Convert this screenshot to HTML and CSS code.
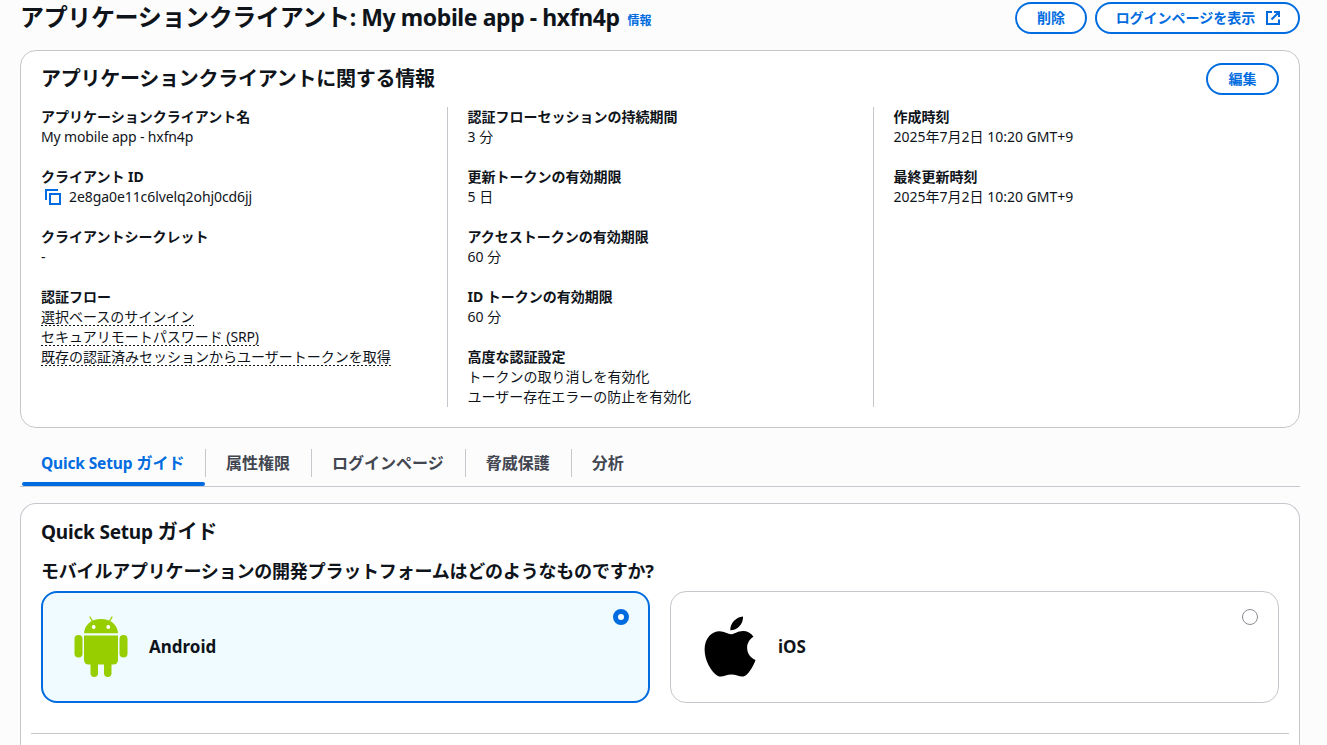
FILE: index.html
```html
<!DOCTYPE html>
<html lang="ja">
<head>
<meta charset="utf-8">
<title>アプリケーションクライアント</title>
<link rel="stylesheet" href="styles.css">
</head>
<body>
<main class="page">
  <header class="page-header">
    <h1 class="page-title">アプリケーションクライアント<span class="en">: My mobile app - hxfn4p</span></h1>
    <a class="info">情報</a>
    <div class="actions">
      <button class="btn">削除</button>
      <button class="btn btn-wide">ログインページを表示
        <svg class="icon" viewBox="0 0 16 16"><path d="M7 2H2v12h12V9.500M9 2h5v5M6.500 9.500 14 2"/></svg>
      </button>
    </div>
  </header>

  <section class="card details">
    <div class="card-header">
      <h2 class="card-title">アプリケーションクライアントに関する情報</h2>
      <button class="btn btn-edit">編集</button>
    </div>
    <div class="columns">
      <dl class="column">
        <div><dt>アプリケーションクライアント名</dt><dd><span class="en">My mobile app - hxfn4p</span></dd></div>
        <div><dt>クライアント <span class="en">ID</span></dt><dd class="copy"><svg class="icon" viewBox="0 0 16 16"><path d="M1 11V1h12M5 5h10v10H5z"/></svg><span class="en id">2e8ga0e11c6lvelq2ohj0cd6jj</span></dd></div>
        <div><dt>クライアントシークレット</dt><dd>-</dd></div>
        <div><dt>認証フロー</dt>
          <dd><span class="dotted">選択ベースのサインイン</span></dd>
          <dd><span class="dotted">セキュアリモートパスワード <span class="en">(SRP)</span></span></dd>
          <dd><span class="dotted">既存の認証済みセッションからユーザートークンを取得</span></dd></div>
      </dl>
      <dl class="column">
        <div><dt>認証フローセッションの持続期間</dt><dd>3 分</dd></div>
        <div><dt>更新トークンの有効期限</dt><dd>5 日</dd></div>
        <div><dt>アクセストークンの有効期限</dt><dd>60 分</dd></div>
        <div><dt><span class="en">ID</span> トークンの有効期限</dt><dd>60 分</dd></div>
        <div><dt>高度な認証設定</dt><dd>トークンの取り消しを有効化</dd><dd>ユーザー存在エラーの防止を有効化</dd></div>
      </dl>
      <dl class="column">
        <div><dt>作成時刻</dt><dd>2025年7月2日 10:20 GMT+9</dd></div>
        <div><dt>最終更新時刻</dt><dd>2025年7月2日 10:20 GMT+9</dd></div>
      </dl>
    </div>
  </section>

  <nav class="tabs">
    <a class="tab active"><span><span class="en">Quick Setup</span> ガイド</span></a>
    <a class="tab"><span>属性権限</span></a>
    <a class="tab"><span>ログインページ</span></a>
    <a class="tab"><span>脅威保護</span></a>
    <a class="tab"><span>分析</span></a>
  </nav>

  <section class="card guide">
    <h2 class="card-title"><span class="en">Quick Setup</span> ガイド</h2>
    <h3 class="question">モバイルアプリケーションの開発プラットフォームはどのようなものですか?</h3>
    <div class="tiles">
      <label class="tile selected">
        <svg class="logo" viewBox="0 0 54 62">
          <g fill="#97ce00">
            <path d="M10 17.300C10.500 9 17 3 27 3s16.500 6 17 14.300z"/>
            <path d="M10 19.500h34v24.500a4.500 4.500 0 0 1-4.500 4.500h-25A4.500 4.500 0 0 1 10 44z"/>
            <rect x="0.500" y="19" width="8" height="22.500" rx="4"/>
            <rect x="45.500" y="19" width="8" height="22.500" rx="4"/>
            <rect x="16.500" y="40" width="7.500" height="21" rx="3.700"/>
            <rect x="30" y="40" width="7.500" height="21" rx="3.700"/>
          </g>
          <path d="m19 6-3-5M35 6l3-5" stroke="#97ce00" stroke-width="1.300" stroke-linecap="round"/>
          <circle cx="19.700" cy="11" r="1.900" fill="#fff"/><circle cx="34.300" cy="11" r="1.900" fill="#fff"/>
        </svg>
        <span class="tile-name">Android</span>
        <span class="radio"></span>
      </label>
      <label class="tile">
        <svg class="logo" viewBox="0 0 54 62">
          <path d="M39 .500C39.500 8 33.500 14.500 26.300 14.300 26 7.500 32 1 39 .500zM27 18.300c3 0 6.500-3.300 12-3.300 4.300 0 8 2 10.500 5.700-9.500 5.800-8 19.300 2 23.300C50 49 45.500 56.500 42 59.200c-4.500 3.200-8.500-.800-14.500-.800s-9.500 3.900-14 1.300C7 55.700.600 44.500.600 33.500.600 22 8 15.500 15.500 15.300c5 0 8.500 3 11.500 3z"/>
        </svg>
        <span class="tile-name">iOS</span>
        <span class="radio"></span>
      </label>
    </div>
    <hr class="rule">
  </section>
</main>
</body>
</html>
```
FILE: styles.css
```css
* { box-sizing: border-box; }
html, body { height: 100%; overflow: hidden; }
body {
  margin: 0;
  background: #fcfcfd;
  color: #0f141a;
  font: 14px/20px "Noto Sans", "Noto Sans CJK JP", sans-serif;
}
h1, h2, h3, dl, dd { margin: 0; }
.page { height: 100%; overflow: hidden; padding: 0 27px 0 20px; }
.page-header { display: flex; height: 50px; align-items: flex-start; white-space: nowrap; }
.page-title { font-size: 24px; line-height: 30px; padding-top: 2px; letter-spacing: -0.35px; }
.page-title .en { font-size: 23px; letter-spacing: -0.42px; }
.info { font-size: 12px; font-weight: 700; color: #006ce0; margin: 11px 0 0 8px; }
.actions { display: flex; gap: 8px; margin: 2px 0 0 auto; }
.btn {
  display: flex;
  align-items: center;
  justify-content: center;
  gap: 8px;
  width: 72px;
  height: 32px;
  padding: 0;
  border: 2px solid #006ce0;
  border-radius: 20px;
  background: #fff;
  color: #006ce0;
  font: inherit;
  font-weight: 700;
}
.btn-wide { width: 205px; gap: 10px; padding-left: 2px; }
.btn-edit { width: 73px; }
.icon { width: 16px; height: 16px; fill: none; stroke: #006ce0; stroke-width: 2; flex: none; }
.card { border: 1px solid #c6c6cd; border-radius: 16px; background: #fff; padding: 12px 20px 0; }
.details { height: 378px; }
.card-header { display: flex; justify-content: space-between; height: 44px; }
.card-title { font-size: 20px; line-height: 32px; letter-spacing: -0.25px; }
.card-title .en { font-size: 19px; letter-spacing: -0.2px; }
.columns { display: grid; grid-template-columns: 406px 426px 406px; height: 300px; }
.column { display: flex; flex-direction: column; gap: 20px; white-space: nowrap; }
.column + .column { border-left: 1px solid #c6c6cd; padding-left: 19.5px; }
dt { font-weight: 700; }
dt, dd { height: 20px; }
dd .en { letter-spacing: -0.15px; }
dd .id { letter-spacing: -0.08px; }
.copy { display: flex; align-items: center; gap: 8px; padding-left: 4px; }
.dotted {
  display: inline-block;
  height: 19px;
  background: repeating-linear-gradient(to right, #0f141a 0 2px, transparent 2px 4px) bottom / 100% 1px no-repeat;
}
.tabs { display: flex; height: 59px; padding: 15px 0 0 1px; border-bottom: 1px solid #c6c6cd; }
.tab { display: flex; padding-top: 6px; height: 43px; font-size: 16px; font-weight: 700; color: #424650; white-space: nowrap; }
.tab span { line-height: 28px; }
.tab > span { height: 28px; padding: 0 21px 0 20px; border-right: 1px solid #c6c6cd; }
.tab:last-child > span { border: 0; }
.active { color: #006ce0; width: 185px; position: relative; }
.active > span { flex: 1; padding-right: 0; }
.active .en { font-size: 15.5px; letter-spacing: -0.15px; }
.active::after { content: ""; position: absolute; left: 1px; right: 1px; bottom: 0; height: 4px; border-radius: 2px; background: #006ce0; }
.guide { margin-top: 16px; height: 280px; border-bottom: 0; }
.question { font-size: 18px; line-height: 26px; margin-top: 10px; letter-spacing: -0.2px; }
.tiles { display: grid; grid-template-columns: 1fr 1fr; gap: 20px; margin-top: 7px; }
.tile { display: flex; align-items: center; height: 112px; padding: 0 20px 0 33px; border: 1px solid #c6c6cd; border-radius: 16px; }
.selected { background: #f0fbff; border: 2px solid #006ce0; padding: 0 19px 0 31px; }
.logo { width: 54px; height: 62px; fill: #000; }
.tile-name { font-size: 17px; font-weight: 700; margin: 0 0 1px 20px; }
.selected .tile-name { margin-left: 21px; }
.radio { width: 16px; height: 16px; margin: 17px 0 auto auto; border: 1px solid #8c8c94; border-radius: 50%; background: #fff; }
.selected .radio { border: 5px solid #006ce0; margin-top: 16px; }
.rule { margin: 30px -10px 0; border: 0; border-top: 1px solid #c6c6cd; }
```
